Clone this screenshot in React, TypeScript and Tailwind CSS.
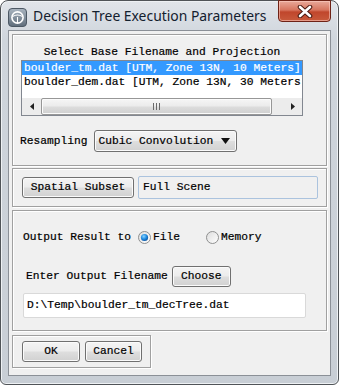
import React from "react";

const btnBg =
  "bg-[linear-gradient(#f4f4f4,#ececec_48%,#dedede_52%,#d1d1d1)]";

function WinButton({
  children,
  className = "",
}: {
  children: React.ReactNode;
  className?: string;
}) {
  return (
    <div
      className={`flex items-center justify-center rounded-[3px] border border-[#707070] ${btnBg} shadow-[inset_0_0_0_1px_#fbfbfb] ${className}`}
    >
      {children}
    </div>
  );
}

function Group({
  children,
  className = "",
}: {
  children: React.ReactNode;
  className?: string;
}) {
  return (
    <div
      className={`border border-[#a0a0a0] shadow-[inset_1px_1px_0_#ffffff,1px_1px_0_#ffffff] ${className}`}
    >
      {children}
    </div>
  );
}

function Radio({ checked }: { checked?: boolean }) {
  return (
    <svg width="13" height="13" viewBox="0 0 13 13">
      <defs>
        <linearGradient id="rb" x1="0" y1="0" x2="1" y2="1">
          <stop offset="0" stopColor="#dcdcdc" />
          <stop offset="1" stopColor="#ffffff" />
        </linearGradient>
        <radialGradient id="rd" cx="0.4" cy="0.35" r="0.7">
          <stop offset="0" stopColor="#8ad4ff" />
          <stop offset="0.55" stopColor="#1f8ae0" />
          <stop offset="1" stopColor="#0b4f9a" />
        </radialGradient>
      </defs>
      <circle cx="6.5" cy="6.5" r="6" fill="url(#rb)" stroke="#8e8f8f" />
      {checked && <circle cx="6.5" cy="6.5" r="3.6" fill="url(#rd)" />}
    </svg>
  );
}

export default function App() {
  return (
    <div className="w-[339px] h-[385px] bg-white font-['Liberation_Mono','Courier_New',monospace] text-[11.25px] text-black [-webkit-text-stroke:0.2px]">
      <div className="w-[339px] h-[385px] rounded-t-[8px] rounded-b-[6px] border border-[#505458] bg-[linear-gradient(#e1e5ea,#cfd5dc_10%,#c8ced5)] flex flex-col px-[7px] pb-[8px] shadow-[inset_0_0_0_1px_#eef1f4]">
        {/* Title bar */}
        <div className="h-[29px] flex items-start shrink-0 [-webkit-text-stroke:0px]">
          <div className="mt-[7px] mr-[6px]">
            <svg width="19" height="19" viewBox="0 0 19 19">
              <defs>
                <linearGradient id="ic" x1="0" y1="0" x2="0" y2="1">
                  <stop offset="0" stopColor="#aab5c0" />
                  <stop offset="1" stopColor="#5f6d7b" />
                </linearGradient>
              </defs>
              <rect x="0.5" y="0.5" width="18" height="18" rx="3.5" fill="url(#ic)" stroke="#4c5864" />
              <circle cx="9.5" cy="9.5" r="5.6" fill="none" stroke="#ffffff" strokeWidth="1.6" />
              <path d="M4.5 8.5 Q9.5 5.5 14.5 8.5" fill="none" stroke="#ffffff" strokeWidth="1.2" />
              <path d="M9.5 9 L9.5 15" stroke="#ffffff" strokeWidth="1.1" />
            </svg>
          </div>
          <div className="mt-[5px] font-['Noto_Sans','Open_Sans',sans-serif] text-[13.9px] text-[#13202e]">
            Decision Tree Execution Parameters
          </div>
          <div className="ml-auto w-[53px] h-[22px] -mt-[1px] rounded-b-[4px] border border-[#6e2216] bg-[linear-gradient(#e9a99a,#d7755f_45%,#c0462c_55%,#c85a3c)] shadow-[inset_0_0_0_1px_rgba(255,210,200,0.55)] flex items-center justify-center">
            <svg width="16" height="13" viewBox="0 0 16 13">
              <path
                d="M3 2 L13 11 M13 2 L3 11"
                stroke="#4a1a12"
                strokeWidth="4.6"
                strokeLinecap="round"
              />
              <path
                d="M3 2 L13 11 M13 2 L3 11"
                stroke="#ffffff"
                strokeWidth="2.6"
                strokeLinecap="round"
              />
            </svg>
          </div>
        </div>

        {/* Content */}
        <div className="flex-1 border border-[#8b9097] bg-[#f0f0f0] flex flex-col px-[3px] pt-[3px]">
          {/* Section 1 */}
          <Group className="h-[132px] flex flex-col pl-[8px] pt-[11px]">
            <div className="h-[13px] leading-[13px] w-[282px] text-center">
              Select Base Filename and Projection
            </div>
            <div className="mt-[1px] w-[282px] h-[56px] border border-[#828790] bg-white flex flex-col">
              <div className="h-[14px] leading-[14px] bg-[#3399ff] text-white pl-[2px] whitespace-nowrap">
                boulder_tm.dat [UTM, Zone 13N, 10 Meters]
              </div>
              <div className="h-[14px] leading-[14px] pl-[2px] whitespace-nowrap">
                boulder_dem.dat [UTM, Zone 13N, 30 Meters
              </div>
              <div className="h-[9px]" />
              <div className="h-[17px] flex bg-[#ececec]">
                <div className="w-[19px] flex items-center justify-center">
                  <svg width="4" height="7" viewBox="0 0 4 7">
                    <path d="M4 0 L0 3.5 L4 7 Z" fill="#222" />
                  </svg>
                </div>
                <div className="w-[231px] rounded-[2px] border border-[#979797] bg-[linear-gradient(#f6f6f6,#ececec_45%,#dcdcdc_55%,#cfcfcf)] shadow-[inset_0_0_0_1px_#fbfbfb] flex items-center justify-center gap-[2px]">
                  <div className="w-[1px] h-[7px] bg-[#6a6a6a]" />
                  <div className="w-[1px] h-[7px] bg-[#6a6a6a]" />
                  <div className="w-[1px] h-[7px] bg-[#6a6a6a]" />
                </div>
                <div className="flex-1" />
                <div className="w-[19px] flex items-center justify-center">
                  <svg width="4" height="7" viewBox="0 0 4 7">
                    <path d="M0 0 L4 3.5 L0 7 Z" fill="#222" />
                  </svg>
                </div>
              </div>
            </div>
            <div className="mt-[14px] h-[22px] flex items-center -ml-[1px]">
              <span>Resampling</span>
              <WinButton className="ml-[6px] w-[143px] h-[22px] !justify-start pl-[4px] pr-[6px]">
                <span>Cubic Convolution</span>
                <svg className="ml-auto" width="9" height="6" viewBox="0 0 9 6">
                  <path d="M0 0 L9 0 L4.5 6 Z" fill="#111" />
                </svg>
              </WinButton>
            </div>
          </Group>

          {/* Section 2 */}
          <Group className="mt-[2px] h-[39px] flex items-center pl-[9px]">
            <WinButton className="w-[112px] h-[21px]">Spatial Subset</WinButton>
            <div className="ml-[4px] w-[180px] h-[23px] border border-[#abc3de] rounded-[2px] bg-[#f0f0f0] flex items-center pl-[4px]">
              Full Scene
            </div>
          </Group>

          {/* Section 3 */}
          <Group className="mt-[3px] h-[121px] flex flex-col">
            <div className="mt-[16px] h-[20px] flex items-center pl-[10px]">
              <span>Output Result to</span>
              <div className="ml-[7px] flex items-center">
                <Radio checked />
              </div>
              <span className="ml-[2px]">File</span>
              <div className="ml-[26px] flex items-center">
                <Radio />
              </div>
              <span className="ml-[2px]">Memory</span>
            </div>
            <div className="mt-[19px] h-[21px] flex items-center pl-[13px]">
              <span>Enter Output Filename</span>
              <WinButton className="ml-[4px] w-[59px] h-[21px]">Choose</WinButton>
            </div>
            <div className="mt-[6px] ml-[10px] w-[283px] h-[25px] border border-[#d9d9d9] rounded-[2px] bg-white flex items-center pl-[3px]">
              D:\Temp\boulder_tm_decTree.dat
            </div>
          </Group>

          {/* Section 4 */}
          <Group className="mt-[4px] w-[139px] h-[33px] flex items-center pl-[9px] gap-[5px]">
            <WinButton className="w-[58px] h-[21px]">OK</WinButton>
            <WinButton className="w-[57px] h-[21px]">Cancel</WinButton>
          </Group>
        </div>
      </div>
    </div>
  );
}
